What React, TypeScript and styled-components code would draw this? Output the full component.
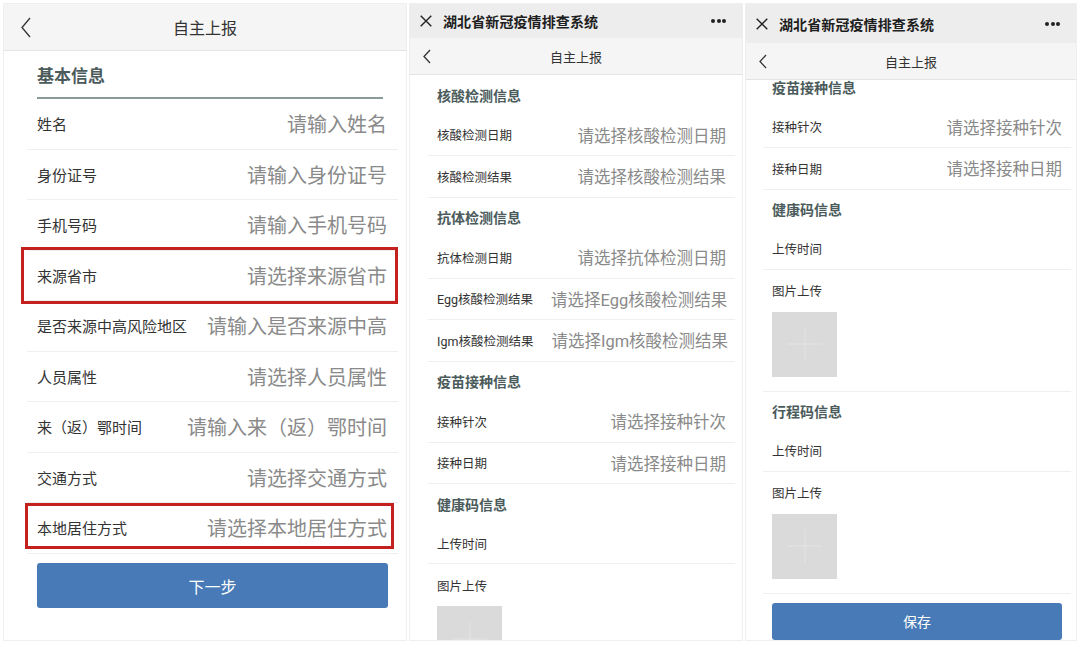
import React from 'react';
import styled, { createGlobalStyle } from 'styled-components';

type Size = 'lg' | 'sm';

type Item =
  | { kind: 'section'; title: string }
  | { kind: 'field'; label: string; hint?: string; mark?: string }
  | { kind: 'upload'; label: string }
  | { kind: 'button'; text: string };

// 两种屏幕尺寸
const S = {
  lg: { label: 15, hint: 20, row: 50.5, padL: 10, padR: 11, gap: 20, head: 17, headH: 48, btnH: 45, btnFont: 16, btnMt: 9.5, btnMx: 10 },
  sm: { label: 12.5, hint: 16.5, row: 41.5, padL: 9, padR: 9, gap: 18, head: 14, headH: 39.5, btnH: 37, btnFont: 14, btnMt: 9, btnMx: 9 },
};

const GlobalStyle = createGlobalStyle`
  html, body {
    margin: 0;
    padding: 0;
    background: #fff;
  }
  body {
    font-family: Roboto, "Noto Sans CJK SC", "Noto Sans", sans-serif;
  }
  * {
    box-sizing: border-box;
  }
`;

const Page = styled.div`
  width: 1080px;
  height: 645px;
  padding: 3px;
  display: flex;
  gap: 2px;
  align-items: flex-start;
  background: #fff;
  overflow: hidden;
`;

const Phone = styled.div<{ $w: number }>`
  flex: none;
  width: ${p => p.$w}px;
  height: 638px;
  display: flex;
  flex-direction: column;
  border: 1px solid #efefef;
  background: #fff;
  overflow: hidden;
`;

const WxBar = styled.div<{ $h: number }>`
  flex: none;
  height: ${p => p.$h}px;
  display: flex;
  align-items: center;
  padding: 0 16px 0 10px;
  background: #ededed;
`;

const WxTitle = styled.div`
  flex: 1;
  margin-left: 11px;
  font-size: 14px;
  font-weight: 700;
  color: #1e1e1e;
  letter-spacing: 0.1px;
`;

const Dots = styled.div`
  display: flex;
  gap: 1.5px;

  span {
    width: 4px;
    height: 4px;
    border-radius: 50%;
    background: #222;
  }
`;

const NavBar = styled.div<{ $h: number; $pl: number }>`
  flex: none;
  height: ${p => p.$h}px;
  display: grid;
  grid-template-columns: 1fr auto 1fr;
  align-items: center;
  padding: 0 ${p => p.$pl}px;
  background: #f5f5f5;
  border-bottom: 1px solid #e4e4e4;
`;

const NavTitle = styled.div<{ $size: Size }>`
  font-size: ${p => (p.$size === 'lg' ? 16 : 13)}px;
  color: #333;
`;

const Body = styled.div<{ $pl: number; $pr: number }>`
  flex: 1;
  min-height: 0;
  overflow: hidden;
  padding: 0 ${p => p.$pr}px 0 ${p => p.$pl}px;
`;

const Scroller = styled.div<{ $offset: number }>`
  margin-top: ${p => -p.$offset}px;
`;

const SectionHead = styled.div<{ $size: Size }>`
  height: ${p => S[p.$size].headH}px;
  display: flex;
  align-items: center;
  font-size: ${p => S[p.$size].head}px;
  font-weight: 700;
  color: #4b5b5b;
  padding-left: ${p => (p.$size === 'lg' ? 0 : S.sm.padL)}px;
  margin: ${p => (p.$size === 'lg' ? '0 15px 0 10px' : '0')};
  border-bottom: ${p => (p.$size === 'lg' ? '2px solid #8b9999' : 'none')};
`;

const Row = styled.div<{ $size: Size; $plain?: boolean; $mark?: string }>`
  position: relative;
  height: ${p => (p.$plain ? 40.5 : S[p.$size].row)}px;
  display: flex;
  align-items: center;
  gap: ${p => S[p.$size].gap}px;
  padding: 0 ${p => S[p.$size].padR}px 0 ${p => S[p.$size].padL}px;
  border-bottom: 1px solid #efefef;

  &::after {
    content: '';
    display: ${p => (p.$mark ? 'block' : 'none')};
    position: absolute;
    inset: ${p => p.$mark || '0'};
    border: 3px solid #c2211d;
    pointer-events: none;
  }
`;

const Label = styled.span<{ $size: Size }>`
  flex: none;
  font-size: ${p => S[p.$size].label}px;
  color: #333;
  white-space: nowrap;
`;

// 大屏输入框会截断过长的提示文字，小屏则完整显示
const Hint = styled.span<{ $size: Size }>`
  flex: ${p => (p.$size === 'lg' ? '1' : 'none')};
  min-width: 0;
  margin-left: auto;
  text-align: right;
  white-space: nowrap;
  overflow: hidden;
  font-size: ${p => S[p.$size].hint}px;
  color: #8a8a8a;
`;

const Upload = styled.div`
  padding: 0 0 14px 9px;
  border-bottom: 1px solid #efefef;
`;

const UploadLabel = styled.div`
  height: 42px;
  display: flex;
  align-items: center;
  font-size: 12.5px;
  color: #333;
`;

const UploadBox = styled.div`
  width: 65px;
  height: 65px;
  display: flex;
  align-items: center;
  justify-content: center;
  background: #dadada;
`;

const Button = styled.div<{ $size: Size }>`
  height: ${p => S[p.$size].btnH}px;
  margin: ${p => S[p.$size].btnMt}px ${p => S[p.$size].btnMx}px 0;
  display: flex;
  align-items: center;
  justify-content: center;
  border-radius: 3px;
  background: #477ab6;
  color: #fff;
  font-size: ${p => S[p.$size].btnFont}px;
`;

const Chevron = ({ w, h }: { w: number; h: number }) => (
  <svg width={w} height={h} viewBox={`0 0 ${w} ${h}`} fill="none">
    <polyline points={`${w - 1},1 1,${h / 2} ${w - 1},${h - 1}`} stroke="#333" strokeWidth="1.3" />
  </svg>
);

const CloseIcon = () => (
  <svg width="12" height="12" viewBox="0 0 12 12" fill="none">
    <path d="M0.7 0.7 L11.3 11.3 M11.3 0.7 L0.7 11.3" stroke="#222" strokeWidth="1.4" />
  </svg>
);

const PlusIcon = () => (
  <svg width="34" height="34" viewBox="0 0 34 34" fill="none">
    <path d="M17 0 V34 M0 17 H34" stroke="#e4e4e4" strokeWidth="1" />
  </svg>
);

const basicInfo: Item[] = [
  { kind: 'section', title: '基本信息' },
  { kind: 'field', label: '姓名', hint: '请输入姓名' },
  { kind: 'field', label: '身份证号', hint: '请输入身份证号' },
  { kind: 'field', label: '手机号码', hint: '请输入手机号码' },
  { kind: 'field', label: '来源省市', hint: '请选择来源省市', mark: '-4px 0 -4px -6px' },
  { kind: 'field', label: '是否来源中高风险地区', hint: '请输入是否来源中高风险地区' },
  { kind: 'field', label: '人员属性', hint: '请选择人员属性' },
  { kind: 'field', label: '来（返）鄂时间', hint: '请输入来（返）鄂时间' },
  { kind: 'field', label: '交通方式', hint: '请选择交通方式' },
  { kind: 'field', label: '本地居住方式', hint: '请选择本地居住方式', mark: '0 4px 4px -2px' },
  { kind: 'button', text: '下一步' },
];

const testInfo: Item[] = [
  { kind: 'section', title: '核酸检测信息' },
  { kind: 'field', label: '核酸检测日期', hint: '请选择核酸检测日期' },
  { kind: 'field', label: '核酸检测结果', hint: '请选择核酸检测结果' },
  { kind: 'section', title: '抗体检测信息' },
  { kind: 'field', label: '抗体检测日期', hint: '请选择抗体检测日期' },
  { kind: 'field', label: 'Egg核酸检测结果', hint: '请选择Egg核酸检测结果' },
  { kind: 'field', label: 'Igm核酸检测结果', hint: '请选择Igm核酸检测结果' },
  { kind: 'section', title: '疫苗接种信息' },
  { kind: 'field', label: '接种针次', hint: '请选择接种针次' },
  { kind: 'field', label: '接种日期', hint: '请选择接种日期' },
  { kind: 'section', title: '健康码信息' },
  { kind: 'field', label: '上传时间' },
  { kind: 'upload', label: '图片上传' },
];

const codeInfo: Item[] = [
  { kind: 'section', title: '疫苗接种信息' },
  { kind: 'field', label: '接种针次', hint: '请选择接种针次' },
  { kind: 'field', label: '接种日期', hint: '请选择接种日期' },
  { kind: 'section', title: '健康码信息' },
  { kind: 'field', label: '上传时间' },
  { kind: 'upload', label: '图片上传' },
  { kind: 'section', title: '行程码信息' },
  { kind: 'field', label: '上传时间' },
  { kind: 'upload', label: '图片上传' },
  { kind: 'button', text: '保存' },
];

const FormItems = ({ items, size }: { items: Item[]; size: Size }) => (
  <>
    {items.map((item, i) => {
      if (item.kind === 'section') {
        return <SectionHead key={i} $size={size}>{item.title}</SectionHead>;
      }
      if (item.kind === 'upload') {
        return (
          <Upload key={i}>
            <UploadLabel>{item.label}</UploadLabel>
            <UploadBox>
              <PlusIcon />
            </UploadBox>
          </Upload>
        );
      }
      if (item.kind === 'button') {
        return <Button key={i} $size={size}>{item.text}</Button>;
      }
      return (
        <Row key={i} $size={size} $plain={!item.hint} $mark={item.mark}>
          <Label $size={size}>{item.label}</Label>
          {item.hint && <Hint $size={size}>{item.hint}</Hint>}
        </Row>
      );
    })}
  </>
);

const WxHeader = ({ h }: { h: number }) => (
  <WxBar $h={h}>
    <CloseIcon />
    <WxTitle>湖北省新冠疫情排查系统</WxTitle>
    <Dots>
      <span />
      <span />
      <span />
    </Dots>
  </WxBar>
);

const App = () => {
  return (
    <Page>
      <GlobalStyle />
      <Phone $w={404}>
        <NavBar $h={47} $pl={17}>
          <Chevron w={10} h={21} />
          <NavTitle $size="lg">自主上报</NavTitle>
        </NavBar>
        <Body $pl={23} $pr={8}>
          <FormItems items={basicInfo} size="lg" />
        </Body>
      </Phone>

      <Phone $w={334}>
        <WxHeader h={34} />
        <NavBar $h={37} $pl={13}>
          <Chevron w={8} h={15} />
          <NavTitle $size="sm">自主上报</NavTitle>
        </NavBar>
        <Body $pl={18} $pr={7}>
          <FormItems items={testInfo} size="sm" />
        </Body>
      </Phone>

      <Phone $w={332}>
        <WxHeader h={39} />
        <NavBar $h={37} $pl={13}>
          <Chevron w={8} h={15} />
          <NavTitle $size="sm">自主上报</NavTitle>
        </NavBar>
        <Body $pl={17} $pr={5}>
          <Scroller $offset={13}>
            <FormItems items={codeInfo} size="sm" />
          </Scroller>
        </Body>
      </Phone>
    </Page>
  );
};

export default App;
